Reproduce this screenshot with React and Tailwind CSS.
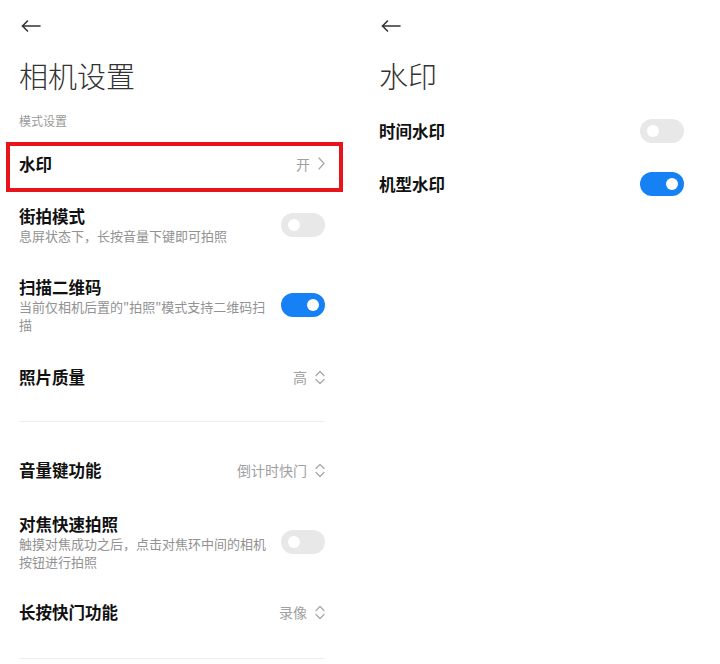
import React from 'react';

const BackArrow = () => (
  <svg width="20" height="12" viewBox="0 0 20 12" fill="none" stroke="#333" strokeWidth="1.6" strokeLinecap="round" strokeLinejoin="round">
    <line x1="1.5" y1="6" x2="19" y2="6" />
    <polyline points="6.5,1 1.5,6 6.5,11" />
  </svg>
);

const ChevronRight = () => (
  <svg width="7" height="13" viewBox="0 0 7 13" fill="none" stroke="#a6a6a6" strokeWidth="1.2" strokeLinecap="round" strokeLinejoin="round">
    <polyline points="1,1 6,6.5 1,12" />
  </svg>
);

const UpDown = () => (
  <svg width="10" height="15" viewBox="0 0 10 15" fill="none" stroke="#a6a6a6" strokeWidth="1.2" strokeLinecap="round" strokeLinejoin="round">
    <polyline points="1,5.5 5,1.5 9,5.5" />
    <polyline points="1,9.5 5,13.5 9,9.5" />
  </svg>
);

const Toggle = ({ on }) => (
  <div className={`relative w-[44px] h-[24px] shrink-0 rounded-full ${on ? 'bg-[#1681f5]' : 'bg-[#e8e8e8]'}`}>
    <div className={`absolute top-[6px] w-[12px] h-[12px] rounded-full bg-white ${on ? 'right-[6px]' : 'left-[7px]'}`} />
  </div>
);

const Title = ({ children }) => (
  <div className="text-[16.5px] leading-[22px] font-semibold text-[#111]">{children}</div>
);

const Sub = ({ children }) => (
  <div className="text-[13px] leading-[18px] text-[#929292]">{children}</div>
);

const Value = ({ text, icon }) => (
  <div className="flex items-center gap-[8px] text-[14px] leading-[22px] text-[#a0a0a0]">
    <span>{text}</span>
    {icon}
  </div>
);

const Header = ({ title }) => (
  <>
    <div className="h-[52px] flex items-center pl-[2px]">
      <BackArrow />
    </div>
    <div className="h-[50px] pb-[4px] flex items-center text-[29px] leading-none font-light text-[#333]">{title}</div>
  </>
);

const App = () => {
  return (
    <div className="w-[720px] h-[664px] bg-white flex overflow-hidden font-['Noto_Sans_CJK_SC','Noto_Sans',sans-serif]">
      {/* Camera settings */}
      <div className="w-[360px] pl-[19px] pr-[35px] flex flex-col">
        <Header title="相机设置" />
        <div className="h-[38px] flex items-center text-[12px] text-[#9a9a9a]">模式设置</div>

        <div className="mt-[2px] -ml-[13px] -mr-[18px] h-[50px] border-[4px] border-[#e8141b] flex items-center justify-between pl-[9px] pr-[14px] pb-[7px]">
          <Title>水印</Title>
          <Value text="开" icon={<ChevronRight />} />
        </div>

        <div className="mt-[13px] flex items-center justify-between gap-4">
          <div>
            <Title>街拍模式</Title>
            <Sub>息屏状态下，长按音量下键即可拍照</Sub>
          </div>
          <Toggle on={false} />
        </div>

        <div className="mt-[31px] flex items-center justify-between">
          <div className="w-[256px]">
            <Title>扫描二维码</Title>
            <Sub>当前仅相机后置的"拍照"模式支持二维码扫描</Sub>
          </div>
          <Toggle on={true} />
        </div>

        <div className="mt-[32px] flex items-center justify-between">
          <Title>照片质量</Title>
          <Value text="高" icon={<UpDown />} />
        </div>

        <div className="mt-[33px] h-px bg-[#eeeeee]" />

        <div className="mt-[37px] flex items-center justify-between">
          <Title>音量键功能</Title>
          <Value text="倒计时快门" icon={<UpDown />} />
        </div>

        <div className="mt-[32px] flex items-center justify-between">
          <div className="w-[256px]">
            <Title>对焦快速拍照</Title>
            <Sub>触摸对焦成功之后，点击对焦环中间的相机按钮进行拍照</Sub>
          </div>
          <Toggle on={false} />
        </div>

        <div className="mt-[30px] flex items-center justify-between">
          <Title>长按快门功能</Title>
          <Value text="录像" icon={<UpDown />} />
        </div>

        <div className="mt-[35px] h-px bg-[#eeeeee]" />
      </div>

      {/* Watermark */}
      <div className="w-[360px] pl-[19px] pr-[36px] flex flex-col">
        <Header title="水印" />
        <div className="mt-[17px] flex items-center justify-between">
          <Title>时间水印</Title>
          <Toggle on={false} />
        </div>
        <div className="mt-[29px] flex items-center justify-between">
          <Title>机型水印</Title>
          <Toggle on={true} />
        </div>
      </div>
    </div>
  );
};

export default App;
